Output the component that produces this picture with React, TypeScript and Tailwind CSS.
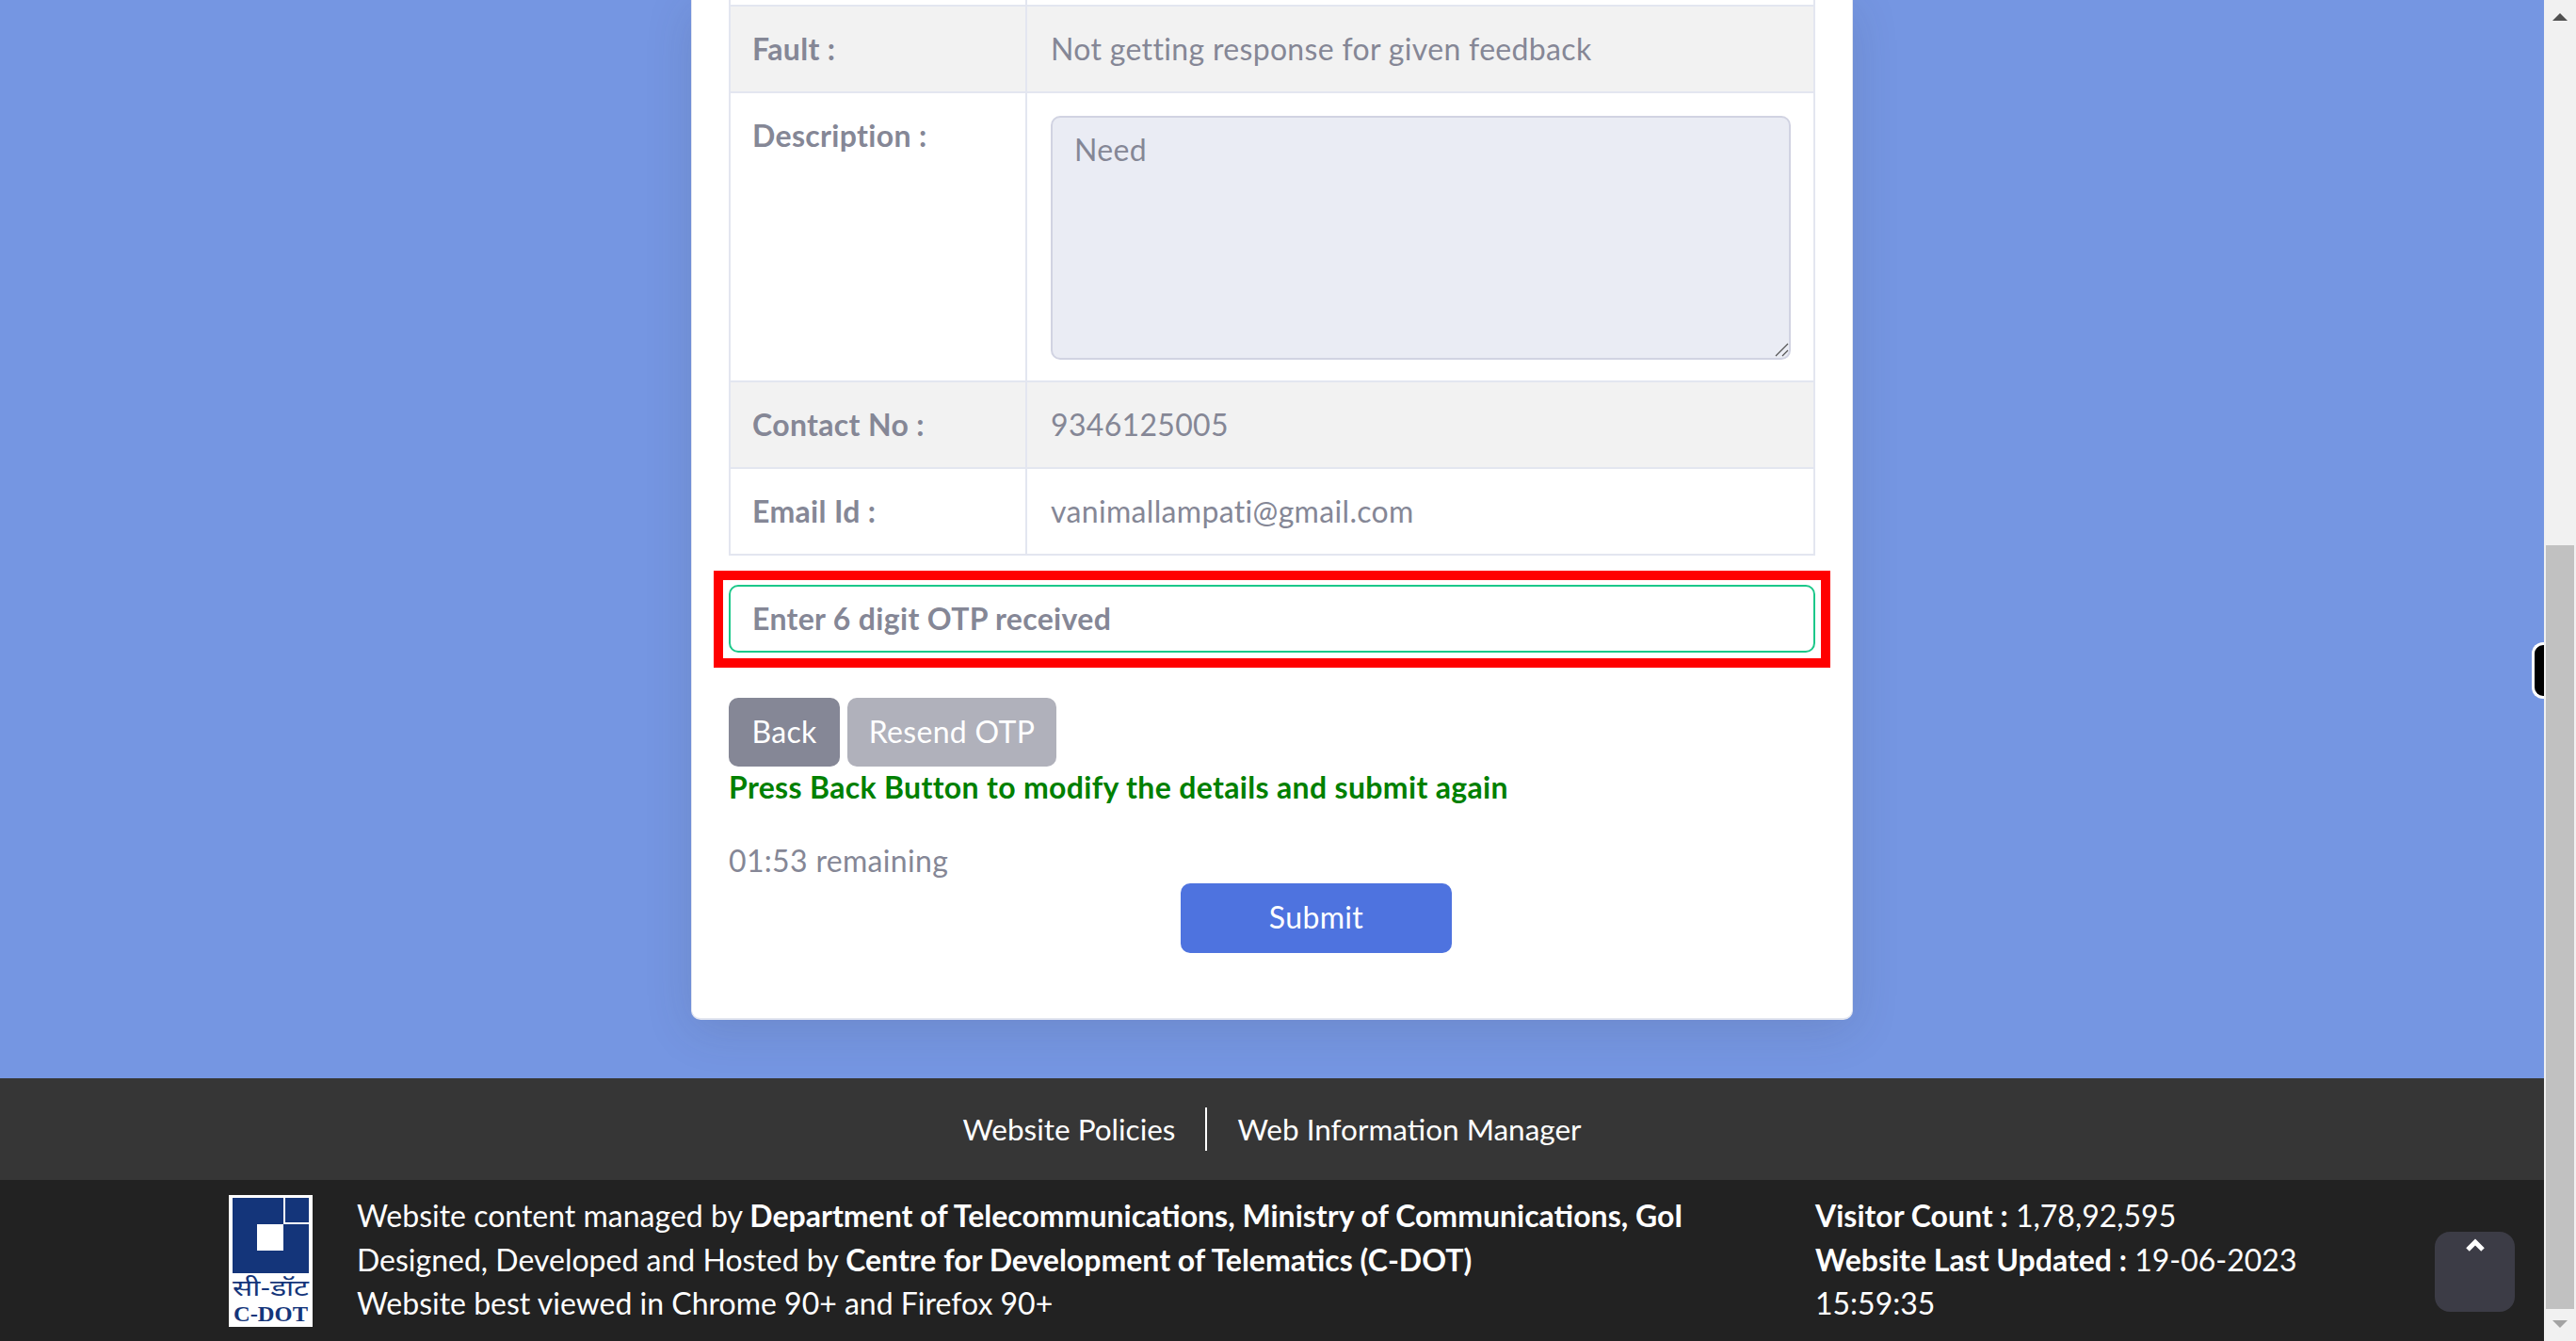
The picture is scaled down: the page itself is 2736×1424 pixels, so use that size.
const Logo = () => (
  <svg width="89" height="140" viewBox="0 0 89 140" className="shrink-0">
    <rect width="89" height="140" fill="#ffffff" />
    <rect x="4" y="3" width="81" height="80" fill="#14357a" />
    <rect x="30" y="31" width="28" height="28" fill="#ffffff" />
    <rect x="58" y="3" width="2" height="28" fill="#ffffff" />
    <rect x="58" y="29" width="27" height="2" fill="#ffffff" />
    <text x="4" y="107" fontSize="24" textLength="81" lengthAdjust="spacingAndGlyphs" fill="#14357a" fontFamily="'Noto Sans Devanagari','Noto Sans',serif">सी-डॉट</text>
    <text x="5" y="134" fontSize="24" fontWeight="700" textLength="79" lengthAdjust="spacingAndGlyphs" fill="#14357a" fontFamily="'Liberation Serif',serif">C-DOT</text>
  </svg>
);

const Row = ({ label, value, shaded }: { label: string; value: string; shaded?: boolean }) => (
  <div className={`grid h-[92px] grid-cols-[315px_1fr] border-b-2 border-[#e3e6f0] ${shaded ? "bg-[#f2f2f2]" : ""}`}>
    <div className="flex items-center border-r-2 border-[#e3e6f0] pl-[23px] font-bold">{label}</div>
    <div className="flex items-center pl-[25px]">{value}</div>
  </div>
);

export default function App() {
  return (
    <div className="flex h-screen overflow-hidden font-['Lato',sans-serif] text-[32px] leading-[46px] text-[#858796]">
      <div className="relative flex min-w-0 flex-1 flex-col">
        <main className="h-[1145px] shrink-0 bg-[#7596e2]">
          <div className="mx-auto h-[1083px] w-[1234px] rounded-b-[10px] border-x border-b-2 border-[#e3e6f0] bg-white px-[39px] tracking-[0.33px] shadow-[0_10px_50px_rgba(58,59,69,0.15)]">
            <div className="border-x-2 border-[#e3e6f0]">
              <div className="grid h-[7px] grid-cols-[315px_1fr] border-b-2 border-[#e3e6f0]">
                <div className="border-r-2 border-[#e3e6f0]" />
              </div>
              <Row label="Fault :" value="Not getting response for given feedback" shaded />
              <div className="grid h-[307px] grid-cols-[315px_1fr] border-b-2 border-[#e3e6f0]">
                <div className="border-r-2 border-[#e3e6f0] pl-[23px] pt-[22px] font-bold">Description :</div>
                <div className="pl-[25px] pt-[24px]">
                  <div className="relative h-[259px] w-[786px]">
                    <textarea
                      readOnly
                      value="Need"
                      className="block h-full w-full resize-none rounded-[10px] border-2 border-[#d1d3e2] bg-[#eaecf4] px-[23px] pb-[12px] pt-[11px] outline-none"
                    />
                    <svg width="16" height="16" viewBox="0 0 16 16" className="absolute bottom-[3px] right-[2px]">
                      <path d="M2 15 L15 2 M9 15 L15 9" stroke="#555555" strokeWidth="1.2" />
                    </svg>
                  </div>
                </div>
              </div>
              <Row label="Contact No :" value="9346125005" shaded />
              <Row label="Email Id :" value="vanimallampati@gmail.com" />
            </div>

            <div className="mx-[-16px] mt-[16px] border-[10px] border-[#ff0000] px-[6px] pb-[6px] pt-[5px]">
              <input
                readOnly
                placeholder="Enter 6 digit OTP received"
                className="block h-[72px] w-full rounded-[10px] border-2 border-[#1cc88a] bg-white px-[23px] pb-[2px] font-bold outline-none placeholder:text-[#858796]"
              />
            </div>

            <div className="mt-[32px] flex gap-[8px]">
              <button className="h-[73px] w-[118px] rounded-[10px] bg-[#858796] pb-[2px] text-white">Back</button>
              <button className="h-[73px] w-[222px] rounded-[10px] bg-[#b0b1bb] pb-[2px] text-white">Resend OTP</button>
            </div>
            <p className="pb-[2px] font-bold leading-[44px] text-[#008000]">Press Back Button to modify the details and submit again</p>
            <p className="mt-[32px] pb-[2px] leading-[44px]">01:53 remaining</p>
            <button className="ml-[480px] block h-[74px] w-[288px] rounded-[10px] bg-[#4e73df] pb-[2px] text-white">Submit</button>
          </div>
        </main>

        <footer className="flex-1 text-white">
          <div className="flex h-[108px] items-center justify-center bg-[#363636] text-[31.5px]">
            <span className="pr-[32px]">Website Policies</span>
            <span className="border-l-2 border-white pl-[32px]">Web Information Manager</span>
          </div>
          <div className="flex h-[171px] bg-[#222222] pl-[243px] pt-[16px] leading-[46.5px]">
            <Logo />
            <div className="ml-[47px] w-[1549px] -translate-y-[1px]">
              <p>Website content managed by <b>Department of Telecommunications, Ministry of Communications, GoI</b></p>
              <p>Designed, Developed and Hosted by <b>Centre for Development of Telematics (C-DOT)</b></p>
              <p>Website best viewed in Chrome 90+ and Firefox 90+</p>
            </div>
            <div className="w-[520px] -translate-y-[1px]">
              <p><b>Visitor Count :</b> 1,78,92,595</p>
              <p><b>Website Last Updated :</b> 19-06-2023</p>
              <p>15:59:35</p>
            </div>
          </div>
        </footer>

        <button className="absolute left-[2586px] top-[1308px] flex h-[85px] w-[85px] justify-center rounded-[16px] bg-[#3c3c46] pt-[7px]">
          <svg width="22" height="15" viewBox="0 0 22 15">
            <path d="M3 12 L11 4 L19 12" fill="none" stroke="#ffffff" strokeWidth="5" />
          </svg>
        </button>
        <div className="absolute right-0 top-[682px] h-[60px] w-[13px] rounded-l-[12px] border-y-[3px] border-l-[3px] border-white bg-black" />
      </div>

      <div className="flex w-[34px] shrink-0 flex-col items-center bg-[#f1f1f1]">
        <svg width="16" height="8" viewBox="0 0 16 8" className="mt-[14px] shrink-0">
          <path d="M0 8 L8 0 L16 8 Z" fill="#505050" />
        </svg>
        <div className="mt-[557px] h-[811px] w-[30px] shrink-0 bg-[#c1c1c1]" />
        <svg width="16" height="8" viewBox="0 0 16 8" className="mt-[12px] shrink-0">
          <path d="M0 0 H16 L8 8 Z" fill="#a3a3a3" />
        </svg>
      </div>
    </div>
  );
}
